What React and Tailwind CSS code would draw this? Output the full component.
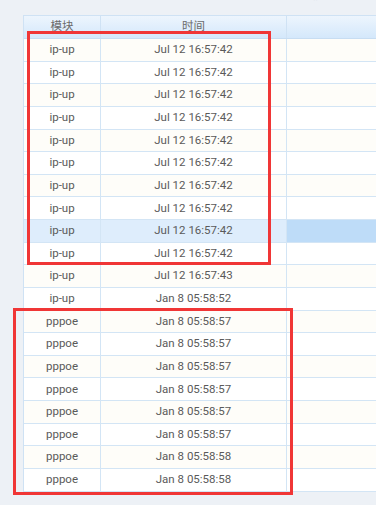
import React from "react";

const rows = [
  ["ip-up", "Jul 12 16:57:42"],
  ["ip-up", "Jul 12 16:57:42"],
  ["ip-up", "Jul 12 16:57:42"],
  ["ip-up", "Jul 12 16:57:42"],
  ["ip-up", "Jul 12 16:57:42"],
  ["ip-up", "Jul 12 16:57:42"],
  ["ip-up", "Jul 12 16:57:42"],
  ["ip-up", "Jul 12 16:57:42"],
  ["ip-up", "Jul 12 16:57:42"],
  ["ip-up", "Jul 12 16:57:42"],
  ["ip-up", "Jul 12 16:57:43"],
  ["ip-up", "Jan 8 05:58:52"],
  ["pppoe", "Jan 8 05:58:57"],
  ["pppoe", "Jan 8 05:58:57"],
  ["pppoe", "Jan 8 05:58:57"],
  ["pppoe", "Jan 8 05:58:57"],
  ["pppoe", "Jan 8 05:58:57"],
  ["pppoe", "Jan 8 05:58:57"],
  ["pppoe", "Jan 8 05:58:58"],
  ["pppoe", "Jan 8 05:58:58"],
];

export default function App() {
  return (
    <div
      className="relative w-[376px] h-[505px] overflow-hidden bg-[#edf1f6]"
      style={{ fontFamily: "Roboto, 'Noto Sans CJK SC', sans-serif" }}
    >
      <div className="h-[15px] overflow-hidden">
        <div className="-mt-[12px] pl-[24px] text-[12px] leading-[14px] text-[#cdd3de] whitespace-nowrap tracking-[3px]">
          注 : 日志记录了系统运行过程中的各类事件信息与状态
        </div>
      </div>
      <div className="ml-[23px] w-[400px] border-l border-t border-[#cfe2f4] text-[11.5px] text-[#5a5a5a]">
        <div className="flex h-[23px] border-b border-[#c7ddf2] bg-gradient-to-b from-[#edf5fd] to-[#d4e8fb] text-[#6b6b6b]">
          <div className="w-[77px] border-r border-[#cfe2f4] flex items-center justify-center">模块</div>
          <div className="w-[186px] border-r border-[#cfe2f4] flex items-center justify-center">时间</div>
          <div className="flex-1"></div>
        </div>
        {rows.map(([m, t], i) => {
          const selected = i === 8;
          const bg = selected ? "bg-[#deedfc]" : i % 2 === 0 ? "bg-[#fefdf9]" : "bg-white";
          return (
            <div key={i} className={`flex h-[22.63px] border-b border-[#d3e5f5] ${bg}`}>
              <div className="w-[77px] border-r border-[#d3e5f5] flex items-center justify-center">{m}</div>
              <div className="w-[186px] border-r border-[#d3e5f5] flex items-center justify-center">{t}</div>
              <div className={`flex-1 ${selected ? "bg-[#bedcf8]" : ""}`}></div>
            </div>
          );
        })}
      </div>
      <div className="absolute left-[27px] top-[31px] w-[244px] h-[234px] border-[3px] border-[#f03636]"></div>
      <div className="absolute left-[13px] top-[308px] w-[280px] h-[187px] border-[3px] border-[#f03636]"></div>
    </div>
  );
}
